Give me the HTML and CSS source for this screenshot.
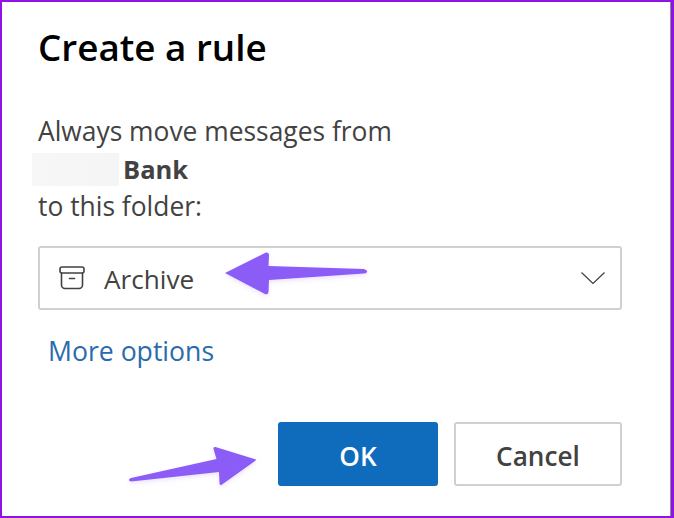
FILE: index.html
```html
<!DOCTYPE html>
<html lang="en">
<head>
<meta charset="utf-8">
<title>Create a rule</title>
<link rel="stylesheet" href="styles.css">
</head>
<body>
<main class="frame">
  <section class="dialog">
    <h1 class="title">Create a rule</h1>
    <div class="message">
      <p class="line">Always move messages from</p>
      <p class="line sender"><span class="redacted"></span><strong>Bank</strong></p>
      <p class="line">to this folder:</p>
    </div>
    <div class="select">
      <svg class="archive" viewBox="0 0 26 24" fill="none" stroke="#424242" stroke-width="1.6" stroke-linejoin="round" stroke-linecap="round" aria-hidden="true">
        <rect x="1" y="1" width="24" height="6" rx="2"/>
        <path d="M2.5 7v12a3.5 3.5 0 0 0 3.5 3.5h14a3.5 3.5 0 0 0 3.5-3.5V7"/>
        <path d="M10.5 12.5h5"/>
      </svg>
      <span class="value">Archive</span>
      <svg class="chevron" viewBox="0 0 24 12" fill="none" stroke="#424242" stroke-width="1.2" aria-hidden="true">
        <path d="M0.5 0.5L12 11.5L23.5 0.5"/>
      </svg>
    </div>
    <a class="more" href="#">More options</a>
    <div class="actions">
      <button class="btn primary" type="button">OK</button>
      <button class="btn" type="button">Cancel</button>
    </div>
  </section>
  <svg class="arrows" viewBox="0 0 674 518" aria-hidden="true">
    <defs>
      <filter id="soft" x="-10%" y="-30%" width="120%" height="170%">
        <feDropShadow dx="0" dy="2" stdDeviation="2" flood-color="#8b5cf6" flood-opacity="0.18"/>
      </filter>
    </defs>
    <path class="arrow" filter="url(#soft)" d="M225 273L266 252.500Q269 252 269 255L268.500 266L364 269Q368 270.500 367 272Q366 273.500 364 273.500L269 280L268.500 292Q268 295 265 294Z"/>
    <path class="arrow" filter="url(#soft)" d="M256 459.500Q256.500 460 255 461L222 484.500Q219.500 486 219.500 483L219 472L131 481.500Q128.500 481 129 479.500Q129.500 478.500 131 478L216.500 459L213.500 449Q213 446.500 215.500 447Z"/>
  </svg>
</main>
</body>
</html>
```

FILE: styles.css
```css
* {
  box-sizing: border-box;
}

html,
body {
  margin: 0;
  padding: 0;
  background: #fff;
}

body {
  width: 674px;
  height: 518px;
  overflow: hidden;
  font-family: "Open Sans", "Noto Sans", sans-serif;
}

.frame {
  position: relative;
  width: 674px;
  height: 518px;
  border: 2px solid #9013e6;
  border-right-width: 3px;
}

.dialog {
  display: flex;
  flex-direction: column;
  height: 100%;
  padding: 0 48px 0 36px;
  background: #fff;
  border-right: 1px solid #8f8b94;
}

.title {
  margin: 22px 0 0;
  font-size: 36.8px;
  line-height: 46px;
  font-weight: 600;
  color: #000;
}

.message {
  margin-top: 43px;
  font-size: 26.4px;
  color: #424242;
}

.line {
  margin: 0;
  height: 37.500px;
  line-height: 37.500px;
}

.sender {
  display: flex;
  align-items: center;
}

.redacted {
  width: 87px;
  height: 33px;
  margin: 0 4px 0 -6px;
  background: linear-gradient(90deg, #f7f7f8, #f5f5f6);
}

.sender strong {
  font-weight: 700;
  font-size: 25.5px;
}

.select {
  display: flex;
  align-items: center;
  height: 64px;
  margin-top: 20.500px;
  padding: 0 15px 0 19px;
  border: 2px solid #d0d0d0;
  border-radius: 3px;
}

.archive {
  width: 26px;
  height: 24px;
  flex: none;
}

.value {
  margin-left: 19px;
  padding-top: 2px;
  font-size: 26.2px;
  color: #424242;
}

.chevron {
  width: 24px;
  height: 12px;
  margin-left: auto;
}

.more {
  align-self: flex-start;
  margin: 21px 0 0 10px;
  font-size: 26.6px;
  line-height: 40px;
  color: #2a6cab;
  text-decoration: none;
}

.actions {
  display: flex;
  justify-content: flex-end;
  gap: 16px;
  margin-top: 51px;
}

.btn {
  width: 168px;
  height: 64px;
  padding: 3px 0 0;
  border: 2px solid #d0d0d0;
  border-radius: 3px;
  background: #fff;
  font-family: inherit;
  font-size: 26.2px;
  font-weight: 600;
  color: #424242;
}

.primary {
  width: 160px;
  border-color: #0f6cbd;
  background: #0f6cbd;
  color: #fff;
}

.arrows {
  position: absolute;
  left: -2px;
  top: -2px;
  width: 674px;
  height: 518px;
  pointer-events: none;
}

.arrow {
  fill: #8b5cf6;
}
```
